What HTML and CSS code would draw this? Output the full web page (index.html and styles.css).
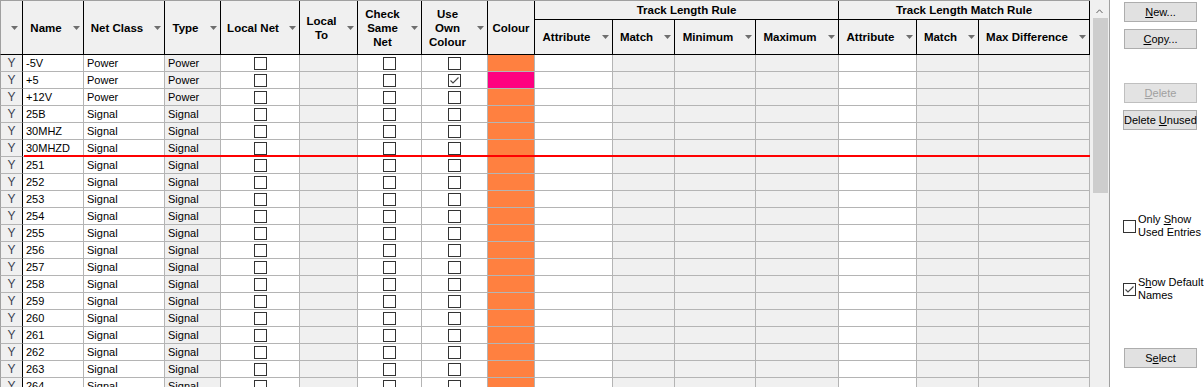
FILE: index.html
```
<!DOCTYPE html>
<html>
<head>
<meta charset="utf-8">
<title>Net Classes</title>
<link rel="stylesheet" href="styles.css">
</head>
<body>
<div class="window">
  <div class="grid">
    <div class="hdr">
      <div class="hc span first"><span class="ht"></span><svg class="arr" viewBox="0 0 7 4"><polygon points="0,0 7,0 3.5,4"/></svg></div>
      <div class="hc span"><span class="ht">Name</span><svg class="arr" viewBox="0 0 7 4"><polygon points="0,0 7,0 3.5,4"/></svg></div>
      <div class="hc span"><span class="ht">Net Class</span><svg class="arr" viewBox="0 0 7 4"><polygon points="0,0 7,0 3.5,4"/></svg></div>
      <div class="hc span"><span class="ht">Type</span><svg class="arr" viewBox="0 0 7 4"><polygon points="0,0 7,0 3.5,4"/></svg></div>
      <div class="hc span"><span class="ht">Local Net</span><svg class="arr" viewBox="0 0 7 4"><polygon points="0,0 7,0 3.5,4"/></svg></div>
      <div class="hc span"><span class="ht">Local<br>To</span><svg class="arr" viewBox="0 0 7 4"><polygon points="0,0 7,0 3.5,4"/></svg></div>
      <div class="hc span"><span class="ht">Check<br>Same<br>Net</span><svg class="arr" viewBox="0 0 7 4"><polygon points="0,0 7,0 3.5,4"/></svg></div>
      <div class="hc span"><span class="ht">Use<br>Own<br>Colour</span><svg class="arr" viewBox="0 0 7 4"><polygon points="0,0 7,0 3.5,4"/></svg></div>
      <div class="hc span"><span class="ht full">Colour</span></div>
      <div class="hc grp g4"><span class="ht full">Track Length Rule</span></div>
      <div class="hc grp g3"><span class="ht full">Track Length Match Rule</span></div>
      <div class="hc sub"><span class="ht">Attribute</span><svg class="arr" viewBox="0 0 7 4"><polygon points="0,0 7,0 3.5,4"/></svg></div>
      <div class="hc sub"><span class="ht">Match</span><svg class="arr" viewBox="0 0 7 4"><polygon points="0,0 7,0 3.5,4"/></svg></div>
      <div class="hc sub"><span class="ht">Minimum</span><svg class="arr" viewBox="0 0 7 4"><polygon points="0,0 7,0 3.5,4"/></svg></div>
      <div class="hc sub"><span class="ht">Maximum</span><svg class="arr" viewBox="0 0 7 4"><polygon points="0,0 7,0 3.5,4"/></svg></div>
      <div class="hc sub"><span class="ht">Attribute</span><svg class="arr" viewBox="0 0 7 4"><polygon points="0,0 7,0 3.5,4"/></svg></div>
      <div class="hc sub"><span class="ht">Match</span><svg class="arr" viewBox="0 0 7 4"><polygon points="0,0 7,0 3.5,4"/></svg></div>
      <div class="hc sub"><span class="ht">Max Difference</span><svg class="arr" viewBox="0 0 7 4"><polygon points="0,0 7,0 3.5,4"/></svg></div>
    </div>
    <div class="rows">
      <div class="row"><div class="c y">Y</div><div class="c">-5V</div><div class="c">Power</div><div class="c g">Power</div><div class="c k"><i class="box"></i></div><div class="c g"></div><div class="c k"><i class="box"></i></div><div class="c k"><i class="box"></i></div><div class="c clr"></div><div class="c"></div><div class="c g"></div><div class="c g"></div><div class="c g"></div><div class="c"></div><div class="c g"></div><div class="c g"></div></div>
      <div class="row"><div class="c y">Y</div><div class="c">+5</div><div class="c">Power</div><div class="c g">Power</div><div class="c k"><i class="box"></i></div><div class="c g"></div><div class="c k"><i class="box"></i></div><div class="c k"><i class="box"><svg class="tick" viewBox="0 0 11 11"><polyline points="1.5,5.5 4,8 9.5,2.5"/></svg></i></div><div class="c clr pink"></div><div class="c"></div><div class="c g"></div><div class="c g"></div><div class="c g"></div><div class="c"></div><div class="c g"></div><div class="c g"></div></div>
      <div class="row"><div class="c y">Y</div><div class="c">+12V</div><div class="c">Power</div><div class="c g">Power</div><div class="c k"><i class="box"></i></div><div class="c g"></div><div class="c k"><i class="box"></i></div><div class="c k"><i class="box"></i></div><div class="c clr"></div><div class="c"></div><div class="c g"></div><div class="c g"></div><div class="c g"></div><div class="c"></div><div class="c g"></div><div class="c g"></div></div>
      <div class="row"><div class="c y">Y</div><div class="c">25B</div><div class="c">Signal</div><div class="c g">Signal</div><div class="c k"><i class="box"></i></div><div class="c g"></div><div class="c k"><i class="box"></i></div><div class="c k"><i class="box"></i></div><div class="c clr"></div><div class="c"></div><div class="c g"></div><div class="c g"></div><div class="c g"></div><div class="c"></div><div class="c g"></div><div class="c g"></div></div>
      <div class="row"><div class="c y">Y</div><div class="c">30MHZ</div><div class="c">Signal</div><div class="c g">Signal</div><div class="c k"><i class="box"></i></div><div class="c g"></div><div class="c k"><i class="box"></i></div><div class="c k"><i class="box"></i></div><div class="c clr"></div><div class="c"></div><div class="c g"></div><div class="c g"></div><div class="c g"></div><div class="c"></div><div class="c g"></div><div class="c g"></div></div>
      <div class="row drop"><div class="c y">Y</div><div class="c">30MHZD</div><div class="c">Signal</div><div class="c g">Signal</div><div class="c k"><i class="box"></i></div><div class="c g"></div><div class="c k"><i class="box"></i></div><div class="c k"><i class="box"></i></div><div class="c clr"></div><div class="c"></div><div class="c g"></div><div class="c g"></div><div class="c g"></div><div class="c"></div><div class="c g"></div><div class="c g"></div></div>
      <div class="row"><div class="c y">Y</div><div class="c">251</div><div class="c">Signal</div><div class="c g">Signal</div><div class="c k"><i class="box"></i></div><div class="c g"></div><div class="c k"><i class="box"></i></div><div class="c k"><i class="box"></i></div><div class="c clr"></div><div class="c"></div><div class="c g"></div><div class="c g"></div><div class="c g"></div><div class="c"></div><div class="c g"></div><div class="c g"></div></div>
      <div class="row"><div class="c y">Y</div><div class="c">252</div><div class="c">Signal</div><div class="c g">Signal</div><div class="c k"><i class="box"></i></div><div class="c g"></div><div class="c k"><i class="box"></i></div><div class="c k"><i class="box"></i></div><div class="c clr"></div><div class="c"></div><div class="c g"></div><div class="c g"></div><div class="c g"></div><div class="c"></div><div class="c g"></div><div class="c g"></div></div>
      <div class="row"><div class="c y">Y</div><div class="c">253</div><div class="c">Signal</div><div class="c g">Signal</div><div class="c k"><i class="box"></i></div><div class="c g"></div><div class="c k"><i class="box"></i></div><div class="c k"><i class="box"></i></div><div class="c clr"></div><div class="c"></div><div class="c g"></div><div class="c g"></div><div class="c g"></div><div class="c"></div><div class="c g"></div><div class="c g"></div></div>
      <div class="row"><div class="c y">Y</div><div class="c">254</div><div class="c">Signal</div><div class="c g">Signal</div><div class="c k"><i class="box"></i></div><div class="c g"></div><div class="c k"><i class="box"></i></div><div class="c k"><i class="box"></i></div><div class="c clr"></div><div class="c"></div><div class="c g"></div><div class="c g"></div><div class="c g"></div><div class="c"></div><div class="c g"></div><div class="c g"></div></div>
      <div class="row"><div class="c y">Y</div><div class="c">255</div><div class="c">Signal</div><div class="c g">Signal</div><div class="c k"><i class="box"></i></div><div class="c g"></div><div class="c k"><i class="box"></i></div><div class="c k"><i class="box"></i></div><div class="c clr"></div><div class="c"></div><div class="c g"></div><div class="c g"></div><div class="c g"></div><div class="c"></div><div class="c g"></div><div class="c g"></div></div>
      <div class="row"><div class="c y">Y</div><div class="c">256</div><div class="c">Signal</div><div class="c g">Signal</div><div class="c k"><i class="box"></i></div><div class="c g"></div><div class="c k"><i class="box"></i></div><div class="c k"><i class="box"></i></div><div class="c clr"></div><div class="c"></div><div class="c g"></div><div class="c g"></div><div class="c g"></div><div class="c"></div><div class="c g"></div><div class="c g"></div></div>
      <div class="row"><div class="c y">Y</div><div class="c">257</div><div class="c">Signal</div><div class="c g">Signal</div><div class="c k"><i class="box"></i></div><div class="c g"></div><div class="c k"><i class="box"></i></div><div class="c k"><i class="box"></i></div><div class="c clr"></div><div class="c"></div><div class="c g"></div><div class="c g"></div><div class="c g"></div><div class="c"></div><div class="c g"></div><div class="c g"></div></div>
      <div class="row"><div class="c y">Y</div><div class="c">258</div><div class="c">Signal</div><div class="c g">Signal</div><div class="c k"><i class="box"></i></div><div class="c g"></div><div class="c k"><i class="box"></i></div><div class="c k"><i class="box"></i></div><div class="c clr"></div><div class="c"></div><div class="c g"></div><div class="c g"></div><div class="c g"></div><div class="c"></div><div class="c g"></div><div class="c g"></div></div>
      <div class="row"><div class="c y">Y</div><div class="c">259</div><div class="c">Signal</div><div class="c g">Signal</div><div class="c k"><i class="box"></i></div><div class="c g"></div><div class="c k"><i class="box"></i></div><div class="c k"><i class="box"></i></div><div class="c clr"></div><div class="c"></div><div class="c g"></div><div class="c g"></div><div class="c g"></div><div class="c"></div><div class="c g"></div><div class="c g"></div></div>
      <div class="row"><div class="c y">Y</div><div class="c">260</div><div class="c">Signal</div><div class="c g">Signal</div><div class="c k"><i class="box"></i></div><div class="c g"></div><div class="c k"><i class="box"></i></div><div class="c k"><i class="box"></i></div><div class="c clr"></div><div class="c"></div><div class="c g"></div><div class="c g"></div><div class="c g"></div><div class="c"></div><div class="c g"></div><div class="c g"></div></div>
      <div class="row"><div class="c y">Y</div><div class="c">261</div><div class="c">Signal</div><div class="c g">Signal</div><div class="c k"><i class="box"></i></div><div class="c g"></div><div class="c k"><i class="box"></i></div><div class="c k"><i class="box"></i></div><div class="c clr"></div><div class="c"></div><div class="c g"></div><div class="c g"></div><div class="c g"></div><div class="c"></div><div class="c g"></div><div class="c g"></div></div>
      <div class="row"><div class="c y">Y</div><div class="c">262</div><div class="c">Signal</div><div class="c g">Signal</div><div class="c k"><i class="box"></i></div><div class="c g"></div><div class="c k"><i class="box"></i></div><div class="c k"><i class="box"></i></div><div class="c clr"></div><div class="c"></div><div class="c g"></div><div class="c g"></div><div class="c g"></div><div class="c"></div><div class="c g"></div><div class="c g"></div></div>
      <div class="row"><div class="c y">Y</div><div class="c">263</div><div class="c">Signal</div><div class="c g">Signal</div><div class="c k"><i class="box"></i></div><div class="c g"></div><div class="c k"><i class="box"></i></div><div class="c k"><i class="box"></i></div><div class="c clr"></div><div class="c"></div><div class="c g"></div><div class="c g"></div><div class="c g"></div><div class="c"></div><div class="c g"></div><div class="c g"></div></div>
      <div class="row"><div class="c y">Y</div><div class="c">264</div><div class="c">Signal</div><div class="c g">Signal</div><div class="c k"><i class="box"></i></div><div class="c g"></div><div class="c k"><i class="box"></i></div><div class="c k"><i class="box"></i></div><div class="c clr"></div><div class="c"></div><div class="c g"></div><div class="c g"></div><div class="c g"></div><div class="c"></div><div class="c g"></div><div class="c g"></div></div>
    </div>
  </div>
  <div class="sb">
    <div class="sb-up"><svg class="chev" viewBox="0 0 7 4"><polyline points="0.5,4 3.5,0.8 6.5,4"/></svg></div>
    <div class="thumb"></div>
  </div>
  <div class="panel">
    <button class="btn"><u>N</u>ew...</button>
    <button class="btn copy"><u>C</u>opy...</button>
    <button class="btn del" disabled><u>D</u>elete</button>
    <button class="btn delu">Delete <u>U</u>nused</button>
    <label class="opt o1"><i class="box"></i><span>Only <u>S</u>how<br>Used Entries</span></label>
    <label class="opt o2"><i class="box"><svg class="tick" viewBox="0 0 11 11"><polyline points="1.5,5.5 4,8 9.5,2.5"/></svg></i><span>S<u>h</u>ow Default<br>Names</span></label>
    <button class="btn sel">S<u>e</u>lect</button>
  </div>
</div>
</body>
</html>
```
FILE: styles.css
```
* { box-sizing: border-box; }
html, body { margin: 0; padding: 0; }
body {
  width: 1204px;
  height: 387px;
  overflow: hidden;
  background: #fff;
  font-family: "Liberation Sans", Arial, sans-serif;
  font-size: 11px;
  color: #000;
}
.window { display: flex; height: 387px; }
.grid { width: 1090px; flex: none; overflow: hidden; }

.hdr, .row {
  display: grid;
  grid-template-columns: 23px 61px 81px 56px 79px 58px 64px 66px 47px 78px 62px 81px 83px 78px 62px 111px;
}
.hdr {
  grid-template-rows: 19px 35px;
  border-top: 1px solid #a0a0a0;
}
.hc {
  background: #f0f0f0;
  border-right: 1px solid #000;
  border-bottom: 1px solid #000;
  display: flex;
  align-items: center;
  font-weight: bold;
  font-size: 11.5px;
  line-height: 14px;
  white-space: nowrap;
}
.hc.span { grid-row: 1 / 3; }
.hc.first { border-left: 1px solid #a0a0a0; }
.hc.g4 { grid-column: 10 / 14; grid-row: 1; }
.hc.g3 { grid-column: 14 / 17; grid-row: 1; }
.hc.sub { grid-row: 2; }
.ht { flex: 1; text-align: center; padding-right: 4px; }
.ht.full { padding-right: 0; }
.arr { width: 7px; height: 4px; margin-right: 3px; flex: none; fill: #6e6e6e; }
.hc.first .arr { margin-right: 4px; }

.row { height: 17px; position: relative; }
.c {
  height: 17px;
  border-right: 1px solid #b4b4b4;
  border-bottom: 1px solid #b4b4b4;
  line-height: 16px;
  padding-left: 3px;
  white-space: nowrap;
  overflow: hidden;
}
.c.y {
  background: #f0f0f0;
  border-left: 1px solid #a0a0a0;
  border-right-color: #000;
  text-align: center;
  padding-left: 0;
  color: #3c4250;
  font-size: 12px;
}
.g { background: #f0f0f0; }
.k { display: flex; align-items: center; justify-content: center; padding-left: 0; }
.box {
  display: block;
  width: 13px;
  height: 13px;
  border: 1px solid #333;
  background: #fff;
  flex: none;
}
.tick { display: block; width: 11px; height: 11px; fill: none; stroke: #444; stroke-width: 1.1; }
.clr { background: #ff8040; }
.clr.pink { background: #ff0080; }
.row.drop::after {
  content: "";
  position: absolute;
  left: 24px;
  right: 0;
  bottom: 0;
  height: 2px;
  background: #ff0000;
}

.sb {
  width: 20px;
  flex: none;
  background: #f0f0f0;
  border-right: 1px solid #a0a0a0;
  display: flex;
  flex-direction: column;
}
.sb-up { height: 18px; display: flex; justify-content: center; padding-top: 9px; }
.chev { width: 7px; height: 4px; fill: none; stroke: #606060; stroke-width: 1; }
.thumb { width: 15px; height: 175px; margin-left: 3px; background: #cdcdcd; }

.panel {
  width: 94px;
  flex: none;
  display: flex;
  flex-direction: column;
  align-items: flex-start;
  padding-top: 2px;
}
.btn {
  width: 73px;
  height: 20px;
  margin: 0 0 0 14px;
  padding: 0;
  background: #e1e1e1;
  border: 1px solid #adadad;
  font-family: "Liberation Sans", Arial, sans-serif;
  font-size: 11px;
  color: #000;
  line-height: 18px;
  text-align: center;
  white-space: nowrap;
}
.btn.copy { margin-top: 7px; }
.btn.del { margin-top: 34px; color: #a0a0a0; border-color: #bfbfbf; background: #e3e3e3; }
.btn.delu { margin-top: 7px; margin-left: 13px; width: 74px; }
.btn.sel { margin-top: 46px; }
.opt {
  display: flex;
  align-items: center;
  gap: 2px;
  margin-left: 13px;
  height: 26px;
  font-size: 11px;
  line-height: 13px;
  white-space: nowrap;
}
.opt .box { border-color: #333; }
.opt.o1 { margin-top: 83px; }
.opt.o2 { margin-top: 37px; }
```
